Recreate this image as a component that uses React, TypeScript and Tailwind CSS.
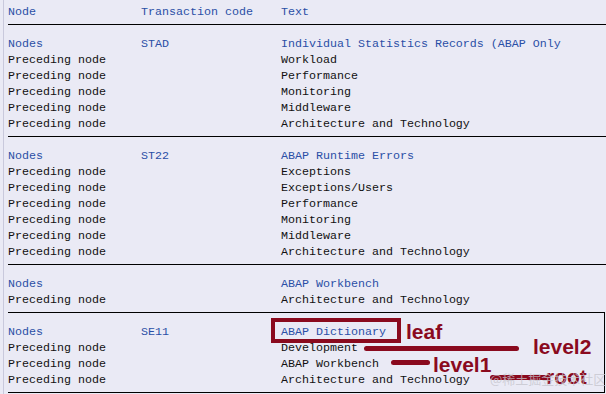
const groups = [
  {
    code: 'STAD',
    title: 'Individual Statistics Records (ABAP Only',
    parents: ['Workload', 'Performance', 'Monitoring', 'Middleware', 'Architecture and Technology'],
  },
  {
    code: 'ST22',
    title: 'ABAP Runtime Errors',
    parents: ['Exceptions', 'Exceptions/Users', 'Performance', 'Monitoring', 'Middleware', 'Architecture and Technology'],
  },
  {
    code: '',
    title: 'ABAP Workbench',
    parents: ['Architecture and Technology'],
  },
  {
    code: 'SE11',
    title: 'ABAP Dictionary',
    parents: ['Development', 'ABAP Workbench', 'Architecture and Technology'],
  },
]

function Row({ a, b, c, blue }: { a: string; b: string; c: string; blue?: boolean }) {
  return (
    <div className={`flex h-4 pt-px whitespace-pre ${blue ? 'text-[#2a4fa6]' : 'text-[#111]'}`}>
      <div className="w-[133px]">{a}</div>
      <div className="w-[140px]">{b}</div>
      <div>{c}</div>
    </div>
  )
}

export default function App() {
  return (
    <div className="relative w-[606px] h-[394px] overflow-hidden bg-[#eaeaf5] font-['Liberation_Mono',monospace] text-[11.67px] leading-4">
      <div className="ml-[3px] h-full border-l border-[#c9c9dc] pl-[4px]">
        <div className="h-[24px] pt-[3px]">
          <Row a="Node" b="Transaction code" c="Text" blue />
        </div>
        {groups.map((g, i) => (
          <div
            key={i}
            className={`border-t border-black pt-[10px] pb-[5px] ${i === groups.length - 1 ? 'mr-[1px] border-b border-r' : ''}`}
          >
            <Row a="Nodes" b={g.code} c={g.title} blue />
            {g.parents.map((p, j) => (
              <Row key={j} a="Preceding node" b="" c={p} />
            ))}
          </div>
        ))}
      </div>

      {/* annotations drawn over the list */}
      <div className="absolute inset-0 font-['Liberation_Sans',sans-serif] text-[21px] font-bold leading-none text-[#8a0a1e]">
        <div className="absolute left-[271px] top-[318px] h-[25px] w-[130px] border-4 border-[#8a0a1e]" />
        <div className="absolute left-[364px] top-[346px] h-[5px] w-[155px] rounded-full bg-[#8a0a1e]" />
        <div className="absolute left-[391px] top-[360px] h-[5px] w-[39px] rounded-full bg-[#8a0a1e]" />
        <div className="absolute left-[490px] top-[375px] h-[5px] w-[60px] rounded-full bg-[#8a0a1e]" />
        <span className="absolute left-[406px] top-[321px]">leaf</span>
        <span className="absolute left-[533px] top-[336px]">level2</span>
        <span className="absolute left-[433px] top-[354px]">level1</span>
        <span className="absolute left-[546px] top-[366px]">root</span>
        <span className="absolute left-[490px] top-[371px] whitespace-nowrap font-['Noto_Sans_CJK_SC',sans-serif] text-[13px] font-normal leading-4 text-[#c4c4cc]/75">
          @稀土掘金技术社区
        </span>
      </div>
    </div>
  )
}
